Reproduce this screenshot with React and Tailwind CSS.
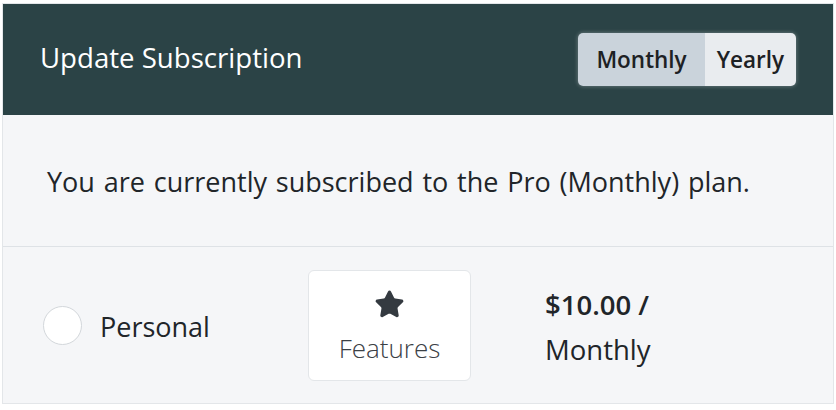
import { Star } from "lucide-react";

export default function App() {
  return (
    <div className="h-[410px] w-[836px] overflow-hidden bg-white pl-[2px] pt-[3px] font-['Open_Sans',sans-serif] text-[#212529]">
      <div className="w-[832px] border border-[#e3e6e9] bg-[#f5f6f8]">
        <div className="flex h-[111px] items-center justify-between bg-[#2b4346] pl-[37px] pr-[37px]">
          <h1 className="mb-[3px] text-[27.6px] font-normal text-white">Update Subscription</h1>
          <div className="flex h-[53px] overflow-hidden rounded-[5px] text-[22.5px] font-semibold text-[#1d2124] shadow-[0_0_4px_rgba(255,255,255,0.35)]">
            <button className="bg-[#cad3db] px-[18px]">Monthly</button>
            <button className="bg-[#e9ecef] px-[12px]">Yearly</button>
          </div>
        </div>
        <div className="flex h-[132px] items-center border-b border-[#dee2e6] pl-[44px] pt-[3px]">
          <p className="text-[27px] [word-spacing:1.8px]">You are currently subscribed to the Pro (Monthly) plan.</p>
        </div>
        <div className="flex h-[156px] items-center pl-[40px]">
          <div className="flex w-[265px] items-center">
            <span className="h-[39px] w-[39px] rounded-full border border-[#d3d7db] bg-white" />
            <span className="ml-[18px] mt-[5px] text-[27px]">Personal</span>
          </div>
          <div className="flex h-[111px] w-[163px] flex-col items-center rounded-[6px] border border-[#e3e6e9] bg-white pt-[18px]">
            <Star className="h-[31px] w-[31px] fill-[#343a40] text-[#343a40]" strokeWidth={1.5} />
            <span className="mt-[9px] text-[26px] font-light text-[#3b4045]">Features</span>
          </div>
          <div className="ml-[74px] mt-[4px] text-[27.5px] leading-[45px]">
            <div className="font-semibold">$10.00 /</div>
            <div>Monthly</div>
          </div>
        </div>
      </div>
    </div>
  );
}
